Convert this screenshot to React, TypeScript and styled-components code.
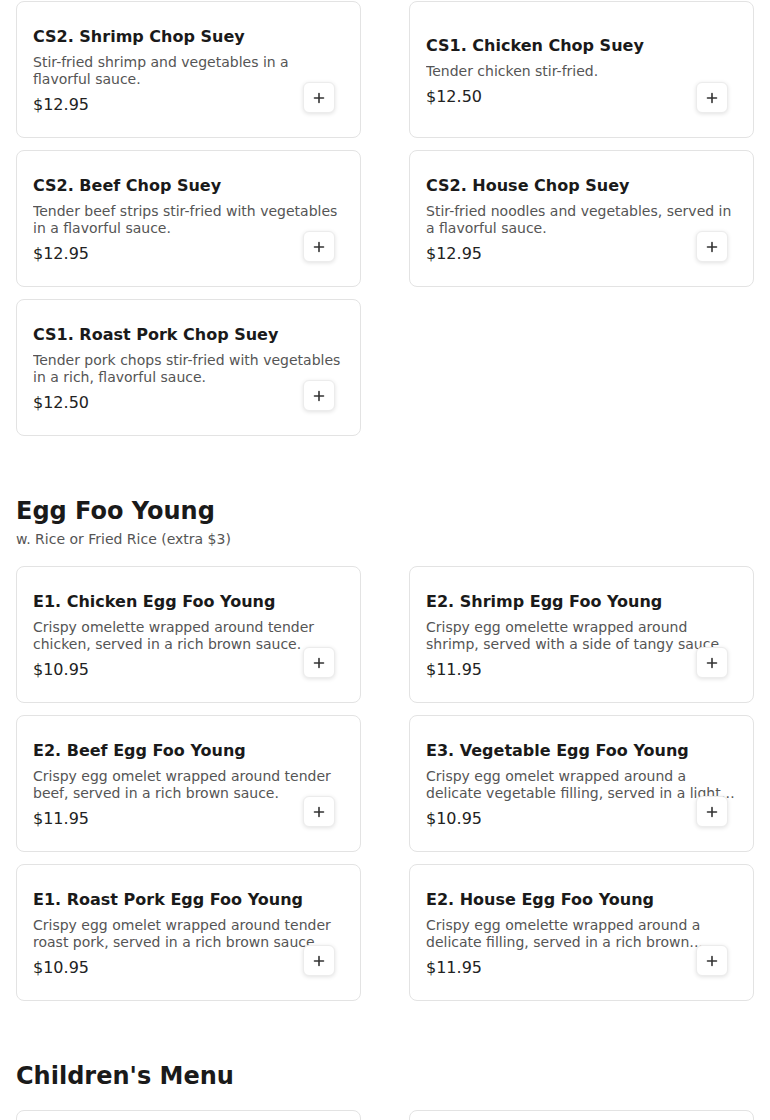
import React from "react";
import styled, { createGlobalStyle } from "styled-components";

const GlobalStyle = createGlobalStyle`
  html, body { margin: 0; padding: 0; background: #ffffff; }
  body { font-family: "DejaVu Sans", "Liberation Sans", sans-serif; color: #1a1a1a; }
  * { box-sizing: border-box; }
`;

const Page = styled.div`
  padding: 1px 16px 40px;
`;

const Section = styled.section`
  & + & { margin-top: 57px; }
`;

const SectionTitle = styled.h2<{ $hasSub?: boolean }>`
  margin: 0 0 ${(p) => (p.$hasSub ? "0" : "16px")};
  font-size: 24px;
  line-height: 36px;
  font-weight: 700;
  color: #1a1a1a;
`;

const SectionSub = styled.p`
  margin: 0 0 16px;
  font-size: 14px;
  line-height: 21px;
  color: #555555;
`;

const Grid = styled.div`
  display: grid;
  grid-template-columns: 1fr 1fr;
  column-gap: 48px;
  row-gap: 12px;
`;

const Card = styled.div`
  position: relative;
  height: 137px;
  border: 1px solid #e3e3e3;
  border-radius: 8px;
  background: #ffffff;
  padding: 3px 16px 0;
  display: flex;
  flex-direction: column;
  justify-content: center;
`;

const ItemName = styled.h3`
  margin: 0;
  font-size: 16px;
  line-height: 24px;
  font-weight: 700;
  color: #1a1a1a;
`;

const ItemDesc = styled.p`
  margin: 5px 0 0;
  font-size: 14px;
  line-height: 17px;
  color: #555555;
  display: -webkit-box;
  -webkit-line-clamp: 2;
  -webkit-box-orient: vertical;
  overflow: hidden;
`;

const Price = styled.div`
  margin-top: 5px;
  font-size: 16px;
  line-height: 24px;
  color: #222222;
`;

const AddButton = styled.button`
  position: absolute;
  right: 25px;
  bottom: 24px;
  width: 32px;
  height: 31px;
  padding: 0;
  border: 1px solid #ececec;
  border-radius: 6px;
  background: #ffffff;
  box-shadow: 0 1px 4px rgba(0, 0, 0, 0.12);
  display: flex;
  align-items: center;
  justify-content: center;
  color: #333333;
  cursor: pointer;
`;

type Item = { name: string; desc: string; price: string };
type Menu = { title: string; sub?: string; items: Item[] };

const menus: Menu[] = [
  {
    title: "",
    items: [
      { name: "CS2. Shrimp Chop Suey", desc: "Stir-fried shrimp and vegetables in a flavorful sauce.", price: "$12.95" },
      { name: "CS1. Chicken Chop Suey", desc: "Tender chicken stir-fried.", price: "$12.50" },
      { name: "CS2. Beef Chop Suey", desc: "Tender beef strips stir-fried with vegetables in a flavorful sauce.", price: "$12.95" },
      { name: "CS2. House Chop Suey", desc: "Stir-fried noodles and vegetables, served in a flavorful sauce.", price: "$12.95" },
      { name: "CS1. Roast Pork Chop Suey", desc: "Tender pork chops stir-fried with vegetables in a rich, flavorful sauce.", price: "$12.50" },
    ],
  },
  {
    title: "Egg Foo Young",
    sub: "w. Rice or Fried Rice (extra $3)",
    items: [
      { name: "E1. Chicken Egg Foo Young", desc: "Crispy omelette wrapped around tender chicken, served in a rich brown sauce.", price: "$10.95" },
      { name: "E2. Shrimp Egg Foo Young", desc: "Crispy egg omelette wrapped around shrimp, served with a side of tangy sauce.", price: "$11.95" },
      { name: "E2. Beef Egg Foo Young", desc: "Crispy egg omelet wrapped around tender beef, served in a rich brown sauce.", price: "$11.95" },
      { name: "E3. Vegetable Egg Foo Young", desc: "Crispy egg omelet wrapped around a delicate vegetable filling, served in a light savory sauce.", price: "$10.95" },
      { name: "E1. Roast Pork Egg Foo Young", desc: "Crispy egg omelet wrapped around tender roast pork, served in a rich brown sauce.", price: "$10.95" },
      { name: "E2. House Egg Foo Young", desc: "Crispy egg omelette wrapped around a delicate filling, served in a rich brown sauce.", price: "$11.95" },
    ],
  },
  {
    title: "Children's Menu",
    items: [
      { name: "K1. Chicken Nuggets", desc: "Crispy chicken nuggets served with french fries.", price: "$7.95" },
      { name: "K2. Chicken Fingers", desc: "Golden chicken fingers served with french fries.", price: "$7.95" },
    ],
  },
];

const PlusIcon = () => (
  <svg width="12" height="12" viewBox="0 0 12 12" aria-hidden="true">
    <path d="M6 1.5v9M1.5 6h9" stroke="currentColor" strokeWidth="1.6" strokeLinecap="round" fill="none" />
  </svg>
);

const MenuCard = ({ item }: { item: Item }) => (
  <Card>
    <ItemName>{item.name}</ItemName>
    <ItemDesc>{item.desc}</ItemDesc>
    <Price>{item.price}</Price>
    <AddButton aria-label={`Add ${item.name}`}>
      <PlusIcon />
    </AddButton>
  </Card>
);

export default function App() {
  return (
    <>
      <GlobalStyle />
      <Page>
        {menus.map((m, i) => (
          <Section key={i}>
            {m.title && <SectionTitle $hasSub={!!m.sub}>{m.title}</SectionTitle>}
            {m.sub && <SectionSub>{m.sub}</SectionSub>}
            <Grid>
              {m.items.map((it, j) => (
                <MenuCard key={j} item={it} />
              ))}
            </Grid>
          </Section>
        ))}
      </Page>
    </>
  );
}
